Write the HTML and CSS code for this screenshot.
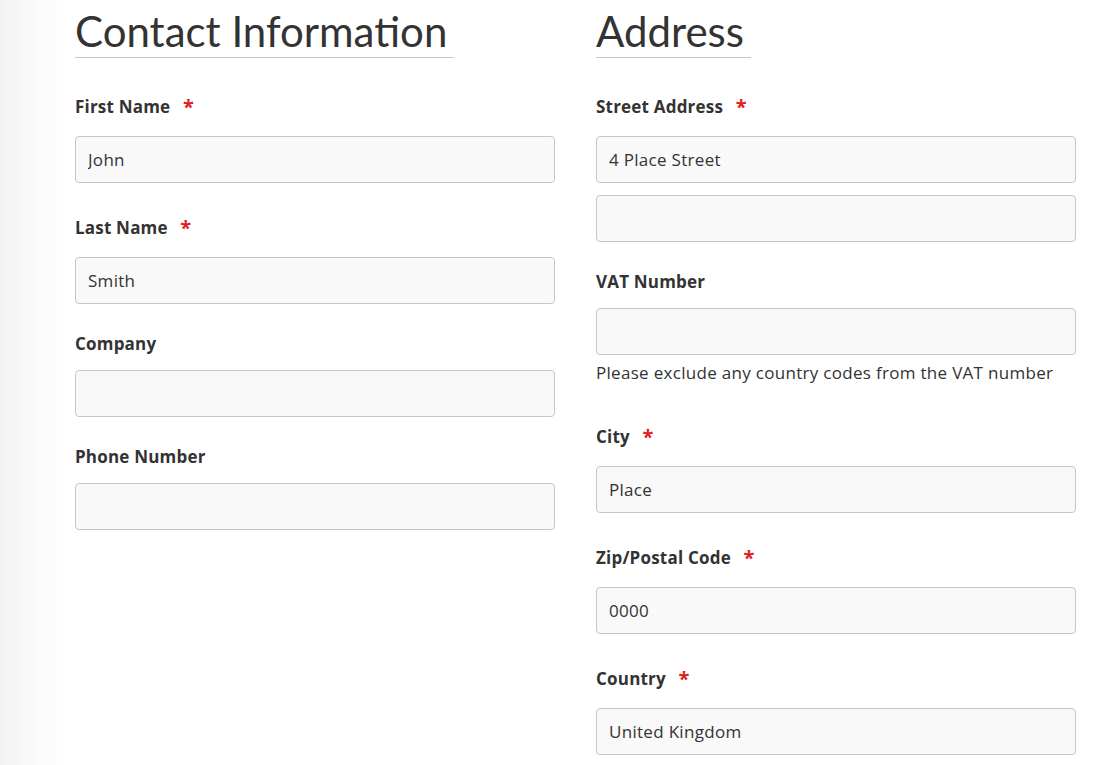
FILE: index.html
```html
<!DOCTYPE html>
<html lang="en">
<head>
<meta charset="utf-8">
<title>Checkout details</title>
<link rel="stylesheet" href="styles.css">
</head>
<body>
<div class="page">
  <section class="column">
    <h2 class="section-title">Contact Information</h2>
    <div class="field">
      <label class="label required">First Name <span class="req">*</span></label>
      <input class="input" type="text" value="John">
    </div>
    <div class="field">
      <label class="label required">Last Name <span class="req">*</span></label>
      <input class="input" type="text" value="Smith">
    </div>
    <div class="field">
      <label class="label">Company</label>
      <input class="input" type="text" value="">
    </div>
    <div class="field">
      <label class="label">Phone Number</label>
      <input class="input" type="text" value="">
    </div>
  </section>
  <section class="column">
    <h2 class="section-title">Address</h2>
    <div class="field">
      <label class="label required">Street Address <span class="req">*</span></label>
      <input class="input" type="text" value="4 Place Street">
      <input class="input input-extra" type="text" value="">
    </div>
    <div class="field">
      <label class="label">VAT Number</label>
      <input class="input" type="text" value="">
      <p class="help">Please exclude any country codes from the VAT number</p>
    </div>
    <div class="field">
      <label class="label required">City <span class="req">*</span></label>
      <input class="input" type="text" value="Place">
    </div>
    <div class="field">
      <label class="label required">Zip/Postal Code <span class="req">*</span></label>
      <input class="input" type="text" value="0000">
    </div>
    <div class="field">
      <label class="label required">Country <span class="req">*</span></label>
      <input class="input" type="text" value="United Kingdom">
    </div>
  </section>
</div>
</body>
</html>
```
FILE: styles.css
```css
html, body {
  margin: 0;
  height: 100%;
}
body {
  font-family: "Open Sans", "Noto Sans", sans-serif;
  color: #333;
  background: linear-gradient(to right, #f2f2f2 0, #fbfbfb 40px, #fff 68px);
  overflow: hidden;
}
.page {
  display: grid;
  grid-template-columns: 480px 480px;
  column-gap: 41px;
  padding-left: 75px;
}
.column {
  display: flex;
  flex-direction: column;
  align-items: flex-start;
}
.section-title {
  display: inline-block;
  margin: 6px 0 4px;
  padding: 0 7px 1px 0;
  font-family: Lato, "Open Sans", sans-serif;
  font-size: 42px;
  font-weight: 400;
  line-height: 50px;
  color: #333;
  border-bottom: 1px solid #c8c8c8;
}
.field {
  align-self: stretch;
  margin-top: 28px;
}
.label {
  display: block;
  font-size: 17px;
  font-weight: 700;
  line-height: 24px;
  letter-spacing: 0.2px;
  margin-bottom: 14px;
}
.label.required {
  padding: 5px 0 3px;
}
.req {
  position: relative;
  top: 1px;
  color: #e0201e;
  margin-left: 8px;
  font-size: 20px;
  line-height: 0;
}
.input {
  display: block;
  box-sizing: border-box;
  width: 100%;
  height: 47px;
  margin: 0;
  padding: 0 12px;
  border: 1px solid #c6c6c6;
  border-radius: 4px;
  background: #f9f9f9;
  font-family: inherit;
  font-size: 17px;
  letter-spacing: 0.3px;
  color: #333;
}
.input-extra {
  margin-top: 12px;
}
.help {
  margin: 6px 0 7px;
  font-size: 17px;
  line-height: 24px;
  letter-spacing: 0.3px;
}
```
